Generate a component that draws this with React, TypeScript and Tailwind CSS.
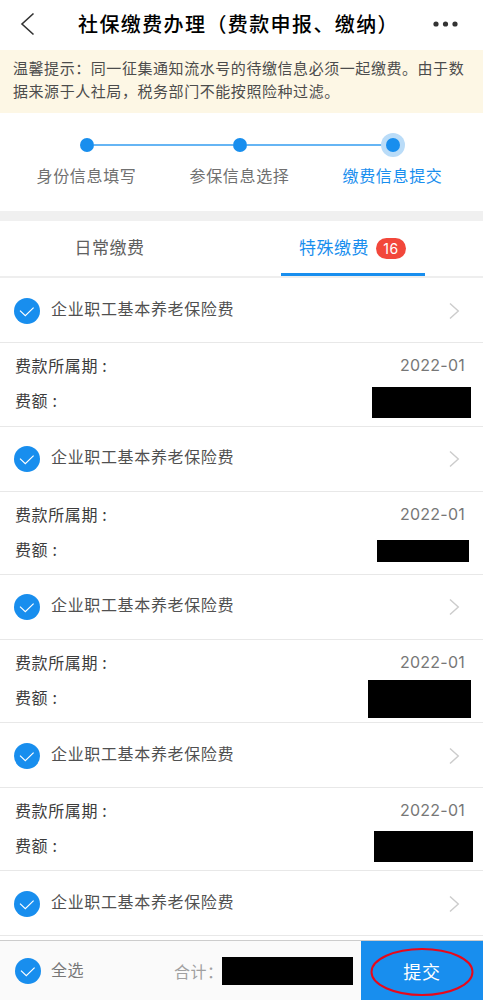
import clsx from 'clsx';

const steps = ['身份信息填写', '参保信息选择', '缴费信息提交'];

const items = [
  { period: '2022-01', mask: 'w-[99px] h-[31px] mr-3' },
  { period: '2022-01', mask: 'w-[92px] h-[22px] mr-3.5' },
  { period: '2022-01', mask: 'w-[103px] h-[38px] mr-3' },
  { period: '2022-01', mask: 'w-[99px] h-[31px] mr-2.5 -mt-px' },
];

const Check = () => (
  <span className="w-[26px] h-[26px] rounded-full bg-[#188eee] flex items-center justify-center shrink-0">
    <svg width="26" height="26" viewBox="0 0 26 26" fill="none" stroke="white" strokeWidth="1.2">
      <path d="M6 12.6l5.3 5L19.6 9.6" />
    </svg>
  </span>
);

const Header = () => (
  <header className="h-[50px] shrink-0 flex items-center bg-white pb-0.5">
    <svg className="ml-[20px] mr-[43px] shrink-0" width="15" height="24" viewBox="0 0 15 24" fill="none" stroke="#333" strokeWidth="1.6">
      <path d="M13.5 1.5L2 12l11.5 10.5" />
    </svg>
    <h1 className="w-[355px] shrink-0 text-[20px] leading-[30px] tracking-[1.4px] font-medium text-black whitespace-nowrap">
      社保缴费办理（费款申报、缴纳）
    </h1>
    <svg width="25" height="6" viewBox="0 0 25 6" fill="#333">
      <circle cx="3" cy="3" r="2.6" />
      <circle cx="12.5" cy="3" r="2.6" />
      <circle cx="22" cy="3" r="2.6" />
    </svg>
  </header>
);

const Steps = () => (
  <div className="h-[98px] shrink-0 pt-5 px-[10px] bg-white flex">
    {steps.map((label, i) => {
      const current = i === steps.length - 1;
      return (
        <div key={label} className="w-[153px] shrink-0 flex flex-col items-center">
          <div className="w-full h-6 flex items-center">
            <span className={clsx('flex-1 h-[2px]', i > 0 && 'bg-[#66b5f4]')} />
            <span className={clsx('rounded-full', current && 'p-[5px] -mx-[5px] bg-[#badcf8]')}>
              <span className="block w-[14px] h-[14px] rounded-full bg-[#188eee]" />
            </span>
            <span className={clsx('flex-1 h-[2px]', !current && 'bg-[#66b5f4]')} />
          </div>
          <span className={clsx('mt-[6px] text-[16px] leading-6 tracking-[0.65px]', current ? 'text-[#188eee]' : 'text-[#707070]')}>
            {label}
          </span>
        </div>
      );
    })}
  </div>
);

const Tabs = () => (
  <div className="h-[57px] shrink-0 flex bg-white border-b-2 border-[#eee] text-[17px] leading-6 tracking-[0.5px]">
    <div className="w-[219px] pt-[14px] text-center text-[#606060]">日常缴费</div>
    <div className="w-[144px] h-[55px] ml-[62px] pl-[18px] pt-[14px] flex items-start text-[#188eee] border-b-[3px] border-[#188eee]">
      <span>特殊缴费</span>
      <span className="ml-[7px] mt-[3px] w-[30px] h-[21px] rounded-full bg-[#f2473b] text-white text-[14px] leading-[21px] text-center font-['Inter']">16</span>
    </div>
  </div>
);

const ItemTitle = () => (
  <div className="h-[65px] shrink-0 pt-px pl-[14px] pr-[23px] flex items-center border-b border-[#e8e8e8]">
    <Check />
    <span className="ml-[11px] -mt-1.5 flex-1 text-[16px] leading-6 tracking-[0.65px] text-[#505050]">企业职工基本养老保险费</span>
    <svg width="11" height="18" viewBox="0 0 11 18" fill="none" stroke="#ccc" strokeWidth="1.4">
      <path d="M1 1.4L9.3 9 1 16.6" />
    </svg>
  </div>
);

const Item = ({ period, mask }: { period: string; mask: string }) => (
  <div className="h-[148.25px] shrink-0 flex flex-col bg-white">
    <ItemTitle />
    <div className="flex-1 pt-[6.5px] border-b border-[#e8e8e8] text-[16px] tracking-[0.6px] text-[#3c3c3c]">
      <div className="h-[35px] pl-[15px] pr-[18px] flex items-center justify-between">
        <span className="-mt-1">费款所属期 :</span>
        <span className="-mt-1 font-['Inter'] tracking-[0.25px] text-[#777]">{period}</span>
      </div>
      <div className="h-[35px] pl-[15px] flex items-center justify-between">
        <span className="-mt-1">费额 :</span>
        <span className={clsx('bg-black', mask)} />
      </div>
    </div>
  </div>
);

const Footer = () => (
  <footer className="h-[60px] shrink-0 flex bg-[#fafafa] border-t border-[#ccc]">
    <div className="w-[361px] flex items-center pl-[15px] text-[16px] tracking-[0.5px]">
      <Check />
      <span className="ml-[10px] -mt-1 w-[123px] text-[#777]">全选</span>
      <span className="w-[48px] shrink-0 whitespace-nowrap text-[#a0a0a0]">合计：</span>
      <span className="w-[131px] h-[28px] shrink-0 bg-black" />
    </div>
    <button className="relative flex-1 bg-[#188eee] text-white text-[18px] leading-7 tracking-[0.8px]">
      提交
      <svg className="absolute left-[8px] top-[6px]" width="105" height="50" viewBox="0 0 105 50" fill="none" stroke="#e8081a" strokeWidth="2">
        <ellipse cx="53" cy="25" rx="50.5" ry="23" />
      </svg>
    </button>
  </footer>
);

const App = () => {
  return (
    <div lang="zh-CN" className="w-full h-[1000px] flex flex-col overflow-hidden bg-white font-['Noto_Sans_CJK_SC',sans-serif]">
      <Header />
      <div className="h-[63px] shrink-0 bg-[#fdf7e5] pl-[13px] pt-[6px] text-[15px] leading-[23px] tracking-[0.56px] text-[#4c4c4c]">
        <p className="whitespace-nowrap">温馨提示：同一征集通知流水号的待缴信息必须一起缴费。由于数</p>
        <p className="whitespace-nowrap">据来源于人社局，税务部门不能按照险种过滤。</p>
      </div>
      <Steps />
      <div className="h-[10px] shrink-0 bg-[#f0f0f0]" />
      <Tabs />
      <main className="flex-1 min-h-0 flex flex-col pt-[0.4px]">
        {items.map((item, i) => (
          <Item key={i} {...item} />
        ))}
        <ItemTitle />
      </main>
      <Footer />
    </div>
  );
};

export default App;
